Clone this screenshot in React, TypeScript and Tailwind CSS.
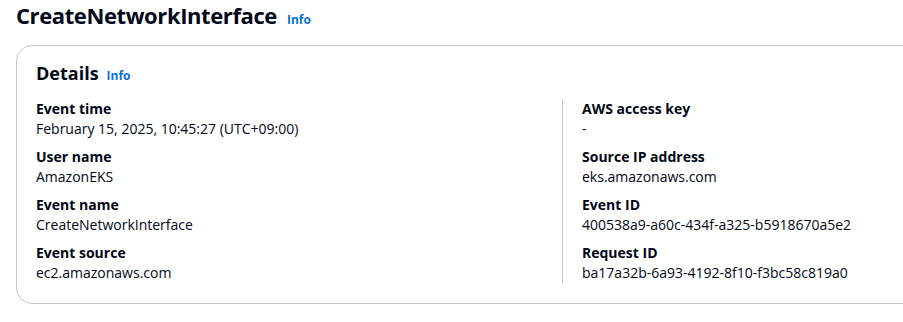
const left = [
  { label: "Event time", value: "February 15, 2025, 10:45:27 (UTC+09:00)" },
  { label: "User name", value: "AmazonEKS" },
  { label: "Event name", value: "CreateNetworkInterface" },
  { label: "Event source", value: "ec2.amazonaws.com" },
];

const right = [
  { label: "AWS access key", value: "-" },
  { label: "Source IP address", value: "eks.amazonaws.com" },
  { label: "Event ID", value: "400538a9-a60c-434f-a325-b5918670a5e2" },
  { label: "Request ID", value: "ba17a32b-6a93-4192-8f10-f3bc58c819a0" },
];

const Field = ({ label, value }: { label: string; value: string }) => (
  <div>
    <div className="text-[14px] leading-[20px] font-bold">{label}</div>
    <div className="text-[14px] leading-[20px]">{value}</div>
  </div>
);

const App = () => {
  return (
    <div
      className="w-full h-[322px] overflow-hidden bg-white text-[#000716] pl-4"
      style={{ fontFamily: '"Open Sans", "Noto Sans", sans-serif' }}
    >
      <div className="flex items-baseline gap-[10px] h-[30px]">
        <h1 className="text-[22px] leading-[30px] font-bold tracking-[-0.4px] whitespace-nowrap">
          CreateNetworkInterface
        </h1>
        <a className="text-[12px] font-bold text-[#0972d3]">Info</a>
      </div>

      <div className="mt-[15px] w-[920px] border border-[#c6c6cd] rounded-2xl pl-[19px] pt-4 pb-5">
        <div className="flex items-baseline gap-2">
          <h2 className="text-[18px] leading-[22px] font-bold">Details</h2>
          <a className="text-[12px] font-bold text-[#0972d3]">Info</a>
        </div>

        <div className="mt-[14px] flex">
          <div className="w-[526px] flex flex-col gap-2">
            {left.map((f) => (
              <Field key={f.label} {...f} />
            ))}
          </div>
          <div className="flex-1 border-l border-[#c6c6cd] pl-[19px] flex flex-col gap-2">
            {right.map((f) => (
              <Field key={f.label} {...f} />
            ))}
          </div>
        </div>
      </div>
    </div>
  );
};

export default App;
